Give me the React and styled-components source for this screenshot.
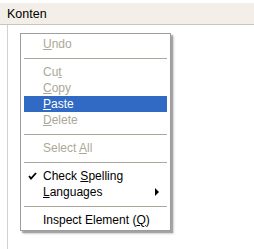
import styled, { createGlobalStyle } from 'styled-components'

const GlobalStyle = createGlobalStyle`
body{
    margin: 0;
    background: #ffffff;
    font-family: "Liberation Sans", Arial, sans-serif;
}
`

const items = [
    { label: 'Undo', key: 0, disabled: true },
    { sep: true },
    { label: 'Cut', key: 2, disabled: true },
    { label: 'Copy', key: 0, disabled: true },
    { label: 'Paste', key: 0, active: true },
    { label: 'Delete', key: 0, disabled: true },
    { sep: true },
    { label: 'Select All', key: 7, disabled: true },
    { sep: true },
    { label: 'Check Spelling', key: 6, checked: true },
    { label: 'Languages', key: 0, submenu: true },
    { sep: true },
    { label: 'Inspect Element (Q)', key: 17 },
]

const Label = ({ text, at }) => (
    <span>
        {text.slice(0, at)}
        <u>{text.charAt(at)}</u>
        {text.slice(at + 1)}
    </span>
)

const App = () => {
    return (
        <Page>
            <GlobalStyle />
            <Header>Konten</Header>
            <Panel />
            <Menu>
                {items.map((it, i) =>
                    it.sep ? (
                        <Separator key={i} />
                    ) : (
                        <Item key={i} $disabled={it.disabled} $active={it.active}>
                            <Check>
                                {it.checked && (
                                    <svg width="9" height="8" viewBox="0 0 9 8">
                                        <path d="M1 4 L3 6.5 L8 1" stroke="#000" strokeWidth="1.8" fill="none" />
                                    </svg>
                                )}
                            </Check>
                            <Label text={it.label} at={it.key} />
                            {it.submenu && <Arrow />}
                        </Item>
                    )
                )}
            </Menu>
        </Page>
    )
}

const Page = styled.div`
position: relative;
width: 254px;
height: 249px;
padding-top: 3px;
box-sizing: border-box;
display: flex;
flex-direction: column;
overflow: hidden;
`

const Header = styled.div`
height: 21px;
line-height: 22px;
padding-left: 7px;
background: #f4eee8;
color: #000;
font-size: 12.5px;
border-bottom: 1px solid #c9c4bc;
`

const Panel = styled.div`
flex: 1;
margin-left: 7px;
border-left: 1px solid #d2d2d2;
`

const Menu = styled.div`
position: absolute;
left: 20px;
top: 33px;
width: 143px;
padding: 2px 3px;
background: #ffffff;
border: 1px solid #9d9d9d;
box-shadow: 2px 2px 1px rgba(0, 0, 0, 0.25), 3px 3px 2px rgba(0, 0, 0, 0.15);
display: flex;
flex-direction: column;
`

const Item = styled.div`
height: 16px;
display: flex;
align-items: center;
font-size: 12px;
color: ${p => (p.$active ? '#ffffff' : p.$disabled ? '#aca899' : '#000000')};
background: ${p => (p.$active ? '#316ac5' : 'transparent')};
white-space: nowrap;
u{
    text-decoration-thickness: 1px;
    text-underline-offset: 1px;
}
`

const Check = styled.span`
width: 15px;
padding-left: 4px;
flex-shrink: 0;
display: flex;
align-items: center;
`

const Arrow = styled.span`
margin-left: auto;
margin-right: 8px;
width: 0;
height: 0;
border-top: 4px solid transparent;
border-bottom: 4px solid transparent;
border-left: 4px solid #000;
`

const Separator = styled.div`
height: 12px;
display: flex;
align-items: center;
&::before{
    content: '';
    flex: 1;
    border-top: 1px solid #aca899;
}
`

export default App
